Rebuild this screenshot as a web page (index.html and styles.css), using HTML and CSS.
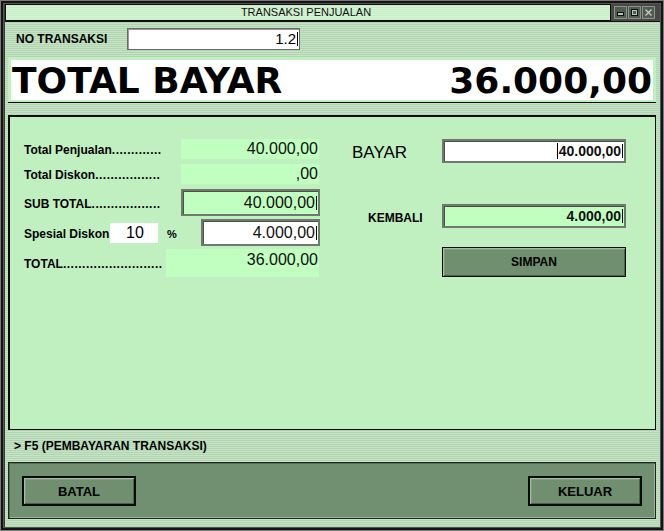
FILE: index.html
```html
<!DOCTYPE html>
<html>
<head>
<meta charset="utf-8">
<link rel="stylesheet" href="styles.css">
</head>
<body>
<div class="window">
  <div class="titlebar">
    <div class="title">TRANSAKSI PENJUALAN</div>
    <div class="winbtns">
      <span class="wb"><svg width="13" height="13" viewBox="0 0 13 13"><rect x="3.5" y="6.5" width="6" height="3" fill="#b8c4b8" stroke="#111"/></svg></span>
      <span class="wb"><svg width="13" height="13" viewBox="0 0 13 13"><rect x="3.5" y="3.5" width="6" height="6" fill="none" stroke="#111" stroke-width="1"/><rect x="4.5" y="4.5" width="4" height="4" fill="none" stroke="#b8c4b8"/></svg></span>
      <span class="wb"><svg width="13" height="13" viewBox="0 0 13 13"><path d="M3.5 3.5 L9.5 9.5 M9.5 3.5 L3.5 9.5" stroke="#c8d0c8" stroke-width="1.2"/></svg></span>
    </div>
  </div>
  <div class="body">
    <div class="notrans">
      <span class="lbl lbl-notrans">NO TRANSAKSI</span>
      <div class="input input-notrans">1.2<i class="endcaret"></i></div>
    </div>
    <div class="totalbar">
      <div class="totalinner"><span>TOTAL BAYAR</span><span>36.000,00</span></div>
    </div>
    <div class="main">
      <div class="left">
        <div class="row r1"><span class="lbl">Total Penjualan<span class="dots">.............</span></span><div class="field f-plain w138">40.000,00</div></div>
        <div class="row r2"><span class="lbl">Total Diskon<span class="dots">.................</span></span><div class="field f-plain w138">,00</div></div>
        <div class="row r3"><span class="lbl">SUB TOTAL<span class="dots">..................</span></span><div class="field f-box w139">40.000,00<i class="endcaret"></i></div></div>
        <div class="row r4"><span class="lbl lbl-sd">Spesial Diskon</span><div class="pct">10</div><span class="lbl pctsign">%</span><div class="field f-white w119">4.000,00<i class="endcaret"></i></div></div>
        <div class="row r5"><span class="lbl">TOTAL<span class="dots">..........................</span></span><div class="field f-plain f-top w153">36.000,00</div></div>
      </div>
      <div class="right">
        <div class="rrow rr1"><span class="bayar">BAYAR</span><div class="field f-white bold w184"><i class="caret"></i>40.000,00<i class="endcaret"></i></div></div>
        <div class="rrow rr2"><span class="lbl kembali">KEMBALI</span><div class="field f-green bold w184">4.000,00<i class="endcaret"></i></div></div>
        <div class="rrow rr3"><span class="spacer"></span><div class="btn simpan">SIMPAN</div></div>
      </div>
    </div>
    <div class="hint">&gt; F5 (PEMBAYARAN TRANSAKSI)</div>
    <div class="bottom">
      <div class="btn bbtn">BATAL</div>
      <div class="btn bbtn">KELUAR</div>
    </div>
  </div>
</div>
</body>
</html>
```
FILE: styles.css
```css
* { box-sizing: border-box; }
html, body { margin: 0; padding: 0; background: #2a2a2a; }
body { font-family: "Liberation Sans", Arial, sans-serif; color: #000; }

.window {
  width: 664px;
  height: 531px;
  background: #3c3c3c;
  display: flex;
  flex-direction: column;
  padding: 4px 4px 4px 5px;
  box-shadow: inset 0 0 0 1px #7a7a7a, inset 0 0 0 3px #141414, inset 0 0 0 4px #555;
}

.titlebar {
  height: 18px;
  display: flex;
  align-items: flex-start;
  background: #484848;
  border-bottom: 1px solid #111;
}
.title {
  width: 606px;
  height: 17px;
  border: 1px solid #101010;
  background: repeating-linear-gradient(to bottom, #c8ecc8 0 1px, #d4f4d4 1px 2px);
  font-size: 11px;
  line-height: 15px;
  text-align: center;
  color: #111;
  padding-right: 4px;
}
.winbtns { display: flex; gap: 1px; margin-left: 3px; margin-top: 2px; }
.wb {
  width: 13px; height: 13px;
  background: #4f5c4f;
  border: 1px solid #8a948a;
  display: block;
}
.wb svg { display: block; margin: -1px; }

.body {
  flex: 1;
  display: flex;
  flex-direction: column;
  background: repeating-linear-gradient(to bottom, #b2d4b2 0 1px, #c4e4c4 1px 2px);
}

.lbl { font-weight: bold; font-size: 12px; white-space: nowrap; }
.dots { letter-spacing: 0.5px; }

.notrans { height: 33px; display: flex; align-items: center; padding-left: 11px; }
.lbl-notrans { width: 111px; }
.input {
  background: #fff;
  border: 1px solid #6a6a6a;
  box-shadow: inset 1px 1px 0 #9a9a9a;
}
.input-notrans {
  width: 173px; height: 22px;
  font-size: 15px;
  line-height: 20px;
  padding-right: 1px;
  display: flex; align-items: center; justify-content: flex-end;
}

.endcaret { display: inline-block; width: 1px; height: 14px; background: #000; margin-left: 1px; }
.caret { display: inline-block; width: 1px; height: 16px; background: #000; margin-right: 1px; }

.totalbar {
  margin: 2px 0 0 3px;
  width: 648px;
  height: 45px;
  border: 3px solid #c0f0c0;
  border-bottom: 2px solid #c0f0c0;
  box-shadow: 0 1px 0 #000;
}
.totalinner {
  height: 100%;
  background: #fff;
  display: flex;
  justify-content: space-between;
  align-items: center;
  padding: 0 1px 0 1px;
  font-family: "DejaVu Sans", Verdana, sans-serif;
  font-weight: bold;
  font-size: 36px;
  line-height: 39px;
}

.main {
  margin: 13px 0 0 3px;
  width: 648px;
  height: 315px;
  background: #c0f0c0;
  border: 2px solid #0c0c0c;
  border-right-width: 1px;
  border-bottom-width: 1px;
  display: flex;
  padding: 22px 0 0 14px;
}
.left { width: 295px; display: flex; flex-direction: column; }
.row { display: flex; align-items: center; justify-content: space-between; }
.row > .lbl { padding-top: 2px; }
.r1 { height: 20px; }
.r2 { height: 20px; margin-top: 5px; }
.r3 { height: 27px; margin-top: 5px; }
.r4 { height: 27px; margin-top: 3px; justify-content: flex-start; }
.r5 { height: 28px; margin-top: 3px; }

.field {
  display: flex; align-items: center; justify-content: flex-end;
  font-size: 16px;
  padding-right: 1px;
  color: #101010;
}
.field.bold { font-weight: bold; font-size: 14px; }
.f-plain { background: #c0ffc0; height: 20px; }
.f-top { height: 28px; align-items: flex-start; padding-top: 2px; }
.f-box {
  height: 27px;
  background: #c0ffc0;
  border: 2px solid #6e7a6e;
  box-shadow: inset 1px 1px 0 #4a524a;
}
.f-white {
  height: 27px;
  background: #fff;
  border: 2px solid #6e7a6e;
  box-shadow: inset 1px 1px 0 #4a524a;
}
.f-green {
  background: #c0ffc0;
  border: 2px solid #6e7a6e;
  box-shadow: inset 1px 1px 0 #4a524a;
}
.w138 { width: 138px; }
.w139 { width: 139px; margin-right: -1px; }
.w119 { width: 119px; margin-left: auto; margin-right: -1px; }
.w153 { width: 153px; }
.w184 { width: 184px; height: 24px; }

.lbl-sd { width: 86px; }
.pct {
  width: 48px; height: 20px;
  background: #fff;
  font-size: 16px;
  line-height: 20px;
  padding-left: 16px;
}
.row > .pctsign { margin-left: 9px; font-size: 11px; }

.right { margin-left: 33px; display: flex; flex-direction: column; }
.rrow { display: flex; align-items: center; }
.rr1 { height: 24px; }
.rr2 { height: 24px; margin-top: 41px; }
.rr3 { height: 30px; margin-top: 19px; }
.bayar { width: 90px; font-size: 17px; padding-top: 4px; }
.kembali { width: 90px; padding-left: 16px; padding-top: 3px; }
.spacer { width: 90px; }

.btn {
  background: #6f8f6f;
  border: 1px solid #0a0a0a;
  box-shadow: inset 1px 1px 0 #a4bca4, inset -1px -1px 0 #4c624c, inset 2px 2px 0 #7e9c7e;
  font-weight: bold;
  font-size: 12px;
  display: flex; align-items: center; justify-content: center;
}
.simpan { width: 184px; height: 30px; }

.hint { height: 32px; padding-left: 9px; display: flex; align-items: center; font-weight: bold; font-size: 12px; }

.bottom {
  margin-left: 3px;
  width: 648px;
  height: 57px;
  background: #718f71;
  border: 1px solid #1c261c;
  box-shadow: inset 1px 1px 0 #546c54, inset -1px -1px 0 #9ab49a;
  display: flex;
  justify-content: space-between;
  padding: 13px 13px 0 13px;
}
.bbtn { width: 114px; height: 30px; border-width: 2px; font-size: 13px; }
```
